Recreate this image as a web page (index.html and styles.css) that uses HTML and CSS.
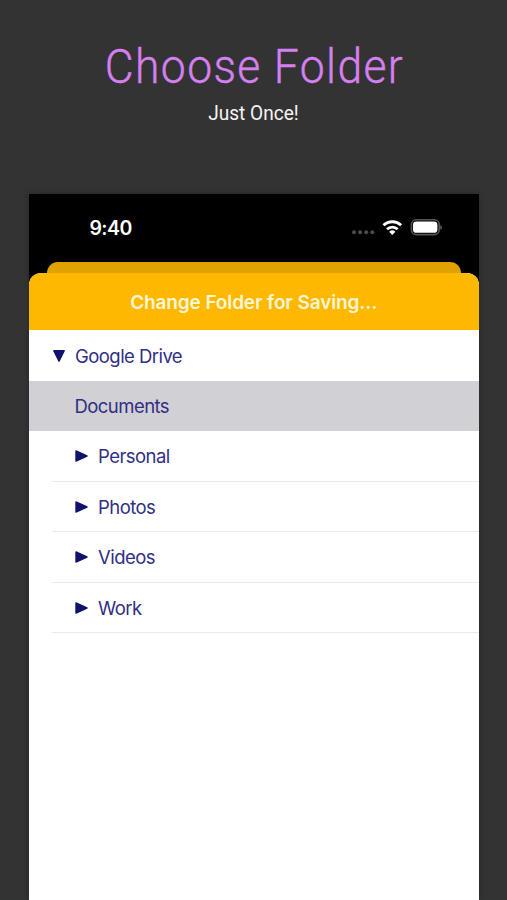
FILE: index.html
```html
<!DOCTYPE html>
<html lang="en">
<head>
<meta charset="utf-8">
<title>Choose Folder</title>
<link rel="stylesheet" href="styles.css">
</head>
<body>
<header class="hero">
  <h1 class="hero-title">Choose Folder</h1>
  <p class="hero-sub">Just Once!</p>
</header>
<main class="phone">
  <div class="status">
    <span class="time">9:40</span>
    <svg class="indicators" width="92" height="20" viewBox="0 0 92 20">
      <g fill="#4b4b4b"><circle cx="4" cy="14.3" r="2"/><circle cx="10.1" cy="14.3" r="2"/><circle cx="16.2" cy="14.3" r="2"/><circle cx="22.3" cy="14.3" r="2"/></g>
      <g fill="none" stroke="#fff" stroke-width="2.9">
        <path d="M33.5 7.3a12.7 12.7 0 0 1 17.6 0"/>
        <path d="M37 11.2a7.7 7.7 0 0 1 10.6 0"/>
      </g>
      <path fill="#fff" d="M42.3 16.9l-3.1-3.1a4.5 4.5 0 0 1 6.2 0z"/>
      <rect x="61.4" y="1.8" width="27.8" height="14.8" rx="4.8" fill="none" stroke="#555" stroke-width="1.6"/>
      <rect x="63" y="3.6" width="24.4" height="11.2" rx="3.4" fill="#fff"/>
      <path fill="#666" d="M90.3 7q1.6.7 1.6 2.4t-1.6 2.4z"/>
    </svg>
  </div>
  <div class="sheet-back"></div>
  <section class="sheet">
    <h2 class="sheet-title">Change Folder for Saving…</h2>
    <ul class="tree">
      <li class="row root">
        <svg width="12" height="12" viewBox="0 0 12 12"><path d="M.8.8h10.4L6 11.2z"/></svg>
        <span>Google Drive</span>
      </li>
      <li class="row selected"><span>Documents</span></li>
      <li class="row child"><svg width="13" height="12" viewBox="0 0 13 12"><path d="M1 1v10L12 6z"/></svg><span>Personal</span></li>
      <li class="row child"><svg width="13" height="12" viewBox="0 0 13 12"><path d="M1 1v10L12 6z"/></svg><span>Photos</span></li>
      <li class="row child"><svg width="13" height="12" viewBox="0 0 13 12"><path d="M1 1v10L12 6z"/></svg><span>Videos</span></li>
      <li class="row child"><svg width="13" height="12" viewBox="0 0 13 12"><path d="M1 1v10L12 6z"/></svg><span>Work</span></li>
    </ul>
  </section>
</main>
</body>
</html>
```
FILE: styles.css
```css
* { box-sizing: border-box; margin: 0; padding: 0; }
body {
  width: 507px;
  height: 900px;
  overflow: hidden;
  display: flex;
  flex-direction: column;
  background: #333;
  font-family: Inter, "Liberation Sans", sans-serif;
}
.hero {
  height: 194px;
  flex: none;
  padding-top: 37px;
  text-align: center;
  font-family: Roboto, sans-serif;
}
.hero-title {
  height: 60px;
  line-height: 60px;
  font-size: 48px;
  font-weight: 300;
  letter-spacing: 1.5px;
  color: #d580f0;
  -webkit-text-stroke: .4px #d580f0;
  white-space: nowrap;
  transform: translateX(1px) scaleX(.925);
}
.hero-sub {
  line-height: 32px;
  font-size: 20.5px;
  color: #f4f4f4;
  transform: scaleX(.93);
}
.phone {
  flex: 1;
  display: flex;
  flex-direction: column;
  width: 450.5px;
  margin-left: 28.5px;
  background: #000;
  box-shadow: 0 0 6px rgba(0, 0, 0, .25);
}
.status {
  height: 67.5px;
  flex: none;
  display: flex;
  justify-content: space-between;
  padding: 24px 37px 0 61px;
}
.time {
  line-height: 20px;
  font-size: 19.5px;
  font-weight: 600;
  letter-spacing: -.6px;
  color: #fff;
}
.sheet-back {
  height: 11.5px;
  flex: none;
  margin: 0 18px;
  border-radius: 11px 11px 0 0;
  background: #dfa200;
}
.sheet {
  flex: 1;
  border-radius: 12px 12px 0 0;
  overflow: hidden;
  background: #fff;
}
.sheet-title {
  height: 57px;
  line-height: 59px;
  text-align: center;
  font-size: 19px;
  font-weight: 600;
  letter-spacing: -.12px;
  color: #fff6d6;
  background: #ffb800;
}
.tree { list-style: none; }
.row {
  height: 50.5px;
  padding-top: 1px;
  display: flex;
  align-items: center;
  font-size: 18.5px;
  letter-spacing: -.55px;
  color: #302f83;
}
.row svg { fill: #10126b; stroke: #10126b; stroke-width: 1.4; stroke-linejoin: round; }
.root { padding-left: 24px; gap: 10.5px; }
.selected { padding-left: 46px; background: #d1d0d5; }
.child {
  margin-left: 23.5px;
  padding-left: 23px;
  gap: 10px;
  border-bottom: 1px solid #e9e9eb;
}
```
